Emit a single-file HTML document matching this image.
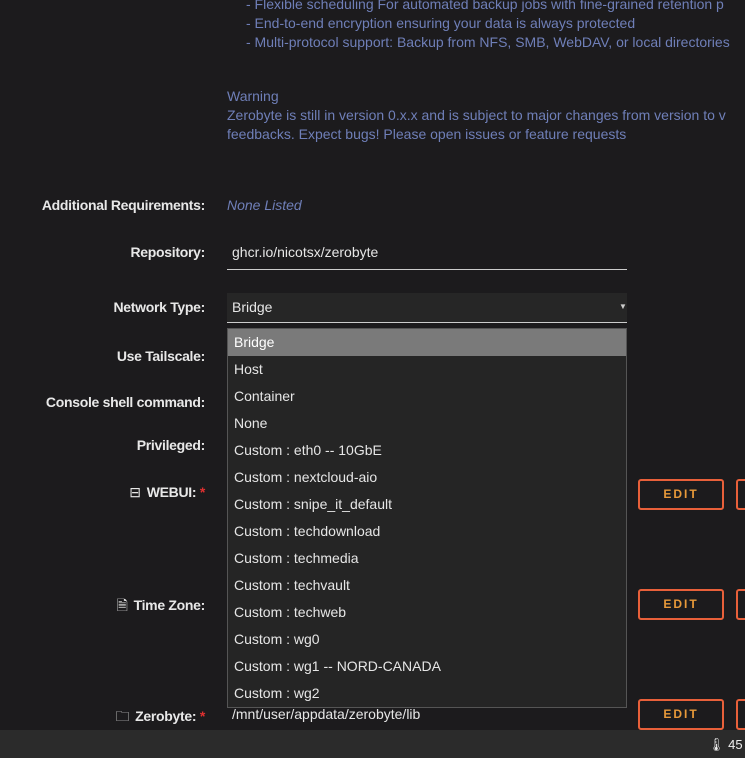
<!DOCTYPE html>
<html><head><style>
body{margin:0;width:745px;height:758px;background:#1c1b1d;font-family:"Liberation Sans",sans-serif;overflow:hidden;position:relative;color:#ddd}
.a{position:absolute;white-space:nowrap}
.blue{color:#6f7fb8;font-size:14px}
.lab{position:absolute;right:540px;font-weight:bold;font-size:14px;color:#e8e8e8;white-space:nowrap;letter-spacing:-0.3px}
.req{color:#e03030}
.dd{position:absolute;left:227px;top:328px;width:398px;height:378px;background:#252525;border:1px solid #555}
.dd div{height:27px;line-height:27px;padding-left:6px;font-size:14px;color:#e6e6e6}
.dd .sel{background:#7a7a7a;color:#fff}
.edit{position:absolute;left:638px;width:86px;height:31px;border:2px solid #e8603a;border-radius:3px;box-sizing:border-box;color:#e89a3a;font-size:12px;font-weight:bold;letter-spacing:2px;text-align:center;line-height:27px}
.edit2{position:absolute;left:736px;width:20px;height:31px;border:2px solid #e8603a;border-radius:3px;box-sizing:border-box}
</style></head><body>
<div class="a blue" style="left:246px;top:-4px">- Flexible scheduling For automated backup jobs with fine-grained retention p</div>
<div class="a blue" style="left:246px;top:15px">- End-to-end encryption ensuring your data is always protected</div>
<div class="a blue" style="left:246px;top:34px">- Multi-protocol support: Backup from NFS, SMB, WebDAV, or local directories</div>
<div class="a blue" style="left:227px;top:88px">Warning</div>
<div class="a blue" style="left:227px;top:107px">Zerobyte is still in version 0.x.x and is subject to major changes from version to v</div>
<div class="a blue" style="left:227px;top:126px">feedbacks. Expect bugs! Please open issues or feature requests</div>

<div class="lab" style="top:197px">Additional Requirements:</div>
<div class="a blue" style="left:227px;top:197px;font-style:italic">None Listed</div>
<div class="lab" style="top:244px">Repository:</div>
<div class="a" style="left:232px;top:244px;font-size:14px;color:#e6e6e6">ghcr.io/nicotsx/zerobyte</div>
<div class="a" style="left:227px;top:269px;width:400px;height:1px;background:#ccc"></div>
<div class="lab" style="top:299px">Network Type:</div>
<div class="a" style="left:227px;top:293px;width:400px;height:29px;background:#262626;border-bottom:1px solid #ccc"></div>
<div class="a" style="left:232px;top:299px;font-size:14px;color:#e6e6e6">Bridge</div>
<div class="a" style="left:619px;top:302px;font-size:8px;color:#ccc">▼</div>
<div class="lab" style="top:348px">Use Tailscale:</div>
<div class="lab" style="top:394px">Console shell command:</div>
<div class="lab" style="top:437px">Privileged:</div>
<div class="lab" style="top:484px"><span style="font-weight:normal;margin-right:6px">⊟</span>WEBUI: <span class="req">*</span></div>
<div class="lab" style="top:595px"><span style="font-weight:normal;margin-right:6px">🗎</span>Time Zone:</div>
<div class="lab" style="top:706px"><span style="font-weight:normal;margin-right:6px">🗀</span>Zerobyte: <span class="req">*</span></div>
<div class="a" style="left:232px;top:706px;font-size:14px;color:#e6e6e6">/mnt/user/appdata/zerobyte/lib</div>

<div class="edit" style="top:479px">EDIT</div><div class="edit2" style="top:479px"></div>
<div class="edit" style="top:589px">EDIT</div><div class="edit2" style="top:589px"></div>
<div class="edit" style="top:699px">EDIT</div><div class="edit2" style="top:699px"></div>

<div class="dd">
<div class="sel">Bridge</div><div>Host</div><div>Container</div><div>None</div>
<div>Custom : eth0 -- 10GbE</div><div>Custom : nextcloud-aio</div><div>Custom : snipe_it_default</div>
<div>Custom : techdownload</div><div>Custom : techmedia</div><div>Custom : techvault</div>
<div>Custom : techweb</div><div>Custom : wg0</div><div>Custom : wg1 -- NORD-CANADA</div><div>Custom : wg2</div>
</div>

<div class="a" style="left:0;top:730px;width:745px;height:28px;background:#2b2b2b"></div>
<div class="a" style="left:708px;top:737px;font-size:13px;color:#eee">🌡 45 °</div>
</body></html>
